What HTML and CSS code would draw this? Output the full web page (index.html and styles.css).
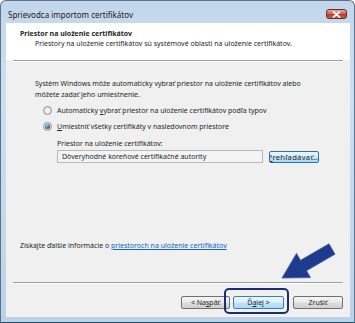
FILE: index.html
```html
<!DOCTYPE html>
<html lang="sk">
<head>
<meta charset="utf-8">
<title>Sprievodca importom certifikátov</title>
<link rel="stylesheet" href="styles.css">
</head>
<body>
<div class="window">
  <div class="titlebar">
    <span class="title">Sprievodca importom certifikátov</span>
    <span class="close">
      <svg width="9" height="7" viewBox="0 0 9 7"><path d="M1.5 1 L7.5 6 M7.5 1 L1.5 6" stroke="#fff" stroke-width="1.8" stroke-linecap="round"/></svg>
    </span>
  </div>
  <div class="client">
    <div class="header">
      <div class="h-title">Priestor na uloženie certifikátov</div>
      <div class="h-sub">Priestory na uloženie certifikátov sú systémové oblasti na uloženie certifikátov.</div>
    </div>
    <div class="sep"></div>
    <div class="body">
      <p class="intro">Systém Windows môže automaticky vybrať priestor na uloženie certifikátov alebo<br>môžete zadať jeho umiestnenie.</p>
      <div class="radio-row"><span class="radio"></span><span>Automaticky <u>v</u>ybrať priestor na uloženie certifikátov podľa typov</span></div>
      <div class="radio-row"><span class="radio checked"></span><span><u>U</u>miestniť všetky certifikáty v nasledovnom priestore</span></div>
      <div class="store">
        <div class="label">Priestor na uloženie certifikátov:</div>
        <div class="store-row">
          <div class="textbox">Dôveryhodné koreňové certifikačné autority</div>
          <div class="btn browse"><span><u>P</u>rehľadávať...</span></div>
        </div>
      </div>
      <div class="more">Získajte ďalšie informácie o <a href="#" class="link">priestoroch na uloženie certifikátov</a></div>
    </div>
    <div class="sep"></div>
    <div class="buttons">
      <span class="btn">&lt; Na<u>s</u>päť</span>
      <span class="btn default">Ď<u>a</u>lej &gt;</span>
      <span class="btn cancel">Zrušiť</span>
    </div>
  </div>
  <div class="focus-ring"></div>
  <svg class="arrow" width="80" height="50" viewBox="275 238 80 50">
    <polygon points="282,278 310.5,277.6 306.5,270.7 335,254.2 329,243.8 300.5,260.3 296.5,253.4" fill="#1f3b8e" stroke="#3d5aa8" stroke-width="0.8" stroke-linejoin="round"/>
  </svg>
</div>
</body>
</html>
```
FILE: styles.css
```css
* { box-sizing: border-box; margin: 0; padding: 0; }
html, body { width: 355px; height: 323px; overflow: hidden; background: #fff; }
body { font-family: "Noto Sans", sans-serif; font-size: 7px; color: #262626; }

.window {
  position: relative;
  width: 355px;
  height: 323px;
  border: 1px solid #5d7189;
  border-bottom-color: #1d5064;
  border-radius: 6px 6px 0 0;
  background: linear-gradient(180deg, #c3d7ec 0%, #cddff1 30%, #bcd2e9 100%);
  padding: 0 4px 5px 5px;
  display: flex;
  flex-direction: column;
}

.titlebar {
  height: 22px;
  padding-top: 4px;
  display: flex;
  align-items: center;
  justify-content: space-between;
  flex: none;
}
.title { font-size: 8px; padding-left: 2px; color: #1a1a1a; }
.close {
  width: 21px;
  height: 10px;
  margin-right: 3px;
  border: 1px solid #6e2c24;
  border-radius: 3px;
  background: linear-gradient(180deg, #e4a79d 0%, #d0665a 45%, #bd3d2f 55%, #c9574a 100%);
  display: flex;
  align-items: center;
  justify-content: center;
}

.client {
  flex: 1;
  background: #f0f0f0;
  display: flex;
  flex-direction: column;
}

.header {
  background: #fff;
  padding: 6px 0 12px 14px;
  flex: none;
}
.h-title { font-weight: bold; line-height: 10px; }
.h-sub { line-height: 9px; padding-left: 15px; }

.sep {
  height: 2px;
  margin: 0 7px;
  border-top: 1px solid #a0a0a0;
  border-bottom: 1px solid #fff;
  flex: none;
}

.body {
  flex: 1;
  display: flex;
  flex-direction: column;
  padding: 16px 0 31px 14px;
}
.intro { line-height: 11px; padding-left: 15px; }

.radio-row {
  height: 16px;
  display: flex;
  align-items: center;
  padding-left: 23px;
  gap: 5px;
}
.radio-row:first-of-type { margin-top: 2px; }
.radio {
  width: 9px;
  height: 9px;
  border-radius: 50%;
  border: 1px solid #8c8e90;
  background: radial-gradient(circle at 50% 50%, #f6f6f6 0%, #dcdcdc 100%);
  display: flex;
  align-items: center;
  justify-content: center;
  flex: none;
}
.radio.checked::after {
  content: "";
  width: 5px;
  height: 5px;
  border-radius: 50%;
  background: radial-gradient(circle at 40% 35%, #9ad4f0 0%, #2a6aa0 55%, #163f6a 100%);
}

.store { padding-left: 37px; margin-top: 5px; }
.label { line-height: 10px; }
.store-row { display: flex; align-items: center; gap: 6px; margin-top: 1px; }
.textbox {
  width: 206px;
  height: 13px;
  border: 1px solid #b8b9bb;
  background: #f4f4f4;
  padding-left: 4px;
  line-height: 11px;
}

.btn {
  height: 12px;
  border: 1px solid #707070;
  border-radius: 2px;
  background: linear-gradient(180deg, #f4f4f4 0%, #ebebeb 48%, #dddddd 52%, #cfcfcf 100%);
  display: flex;
  align-items: center;
  justify-content: center;
  overflow: hidden;
  white-space: nowrap;
}
.btn.browse {
  width: 50px;
  border-color: #2f6fa8;
  background: linear-gradient(180deg, #e8f5fc 0%, #d9effa 48%, #bee6fd 52%, #a7d9f5 100%);
}
.btn.browse span { flex: none; font-size: 7.6px; letter-spacing: 0.3px; }

.more { margin-top: auto; line-height: 10px; }
.link { color: #0a66c8; text-decoration: underline; }

.buttons {
  flex: none;
  height: 33px;
  display: flex;
  align-items: flex-start;
  justify-content: flex-end;
  padding: 12px 7px 0 0;
}
.buttons .btn { width: 49px; height: 13px; }
.buttons .btn.default {
  width: 51px;
  margin-left: 3px;
  border-color: #3c7fb1;
  background: linear-gradient(180deg, #eaf6fd 0%, #d9f0fc 48%, #bee6fd 52%, #a7d9f5 100%);
}
.buttons .btn.cancel { width: 50px; margin-left: 9px; }

.focus-ring {
  position: absolute;
  left: 223px;
  top: 287px;
  width: 65px;
  height: 26px;
  border: 2px solid #1b2d72;
  border-radius: 5px;
}
.arrow {
  position: absolute;
  left: 274px;
  top: 237px;
}
```
